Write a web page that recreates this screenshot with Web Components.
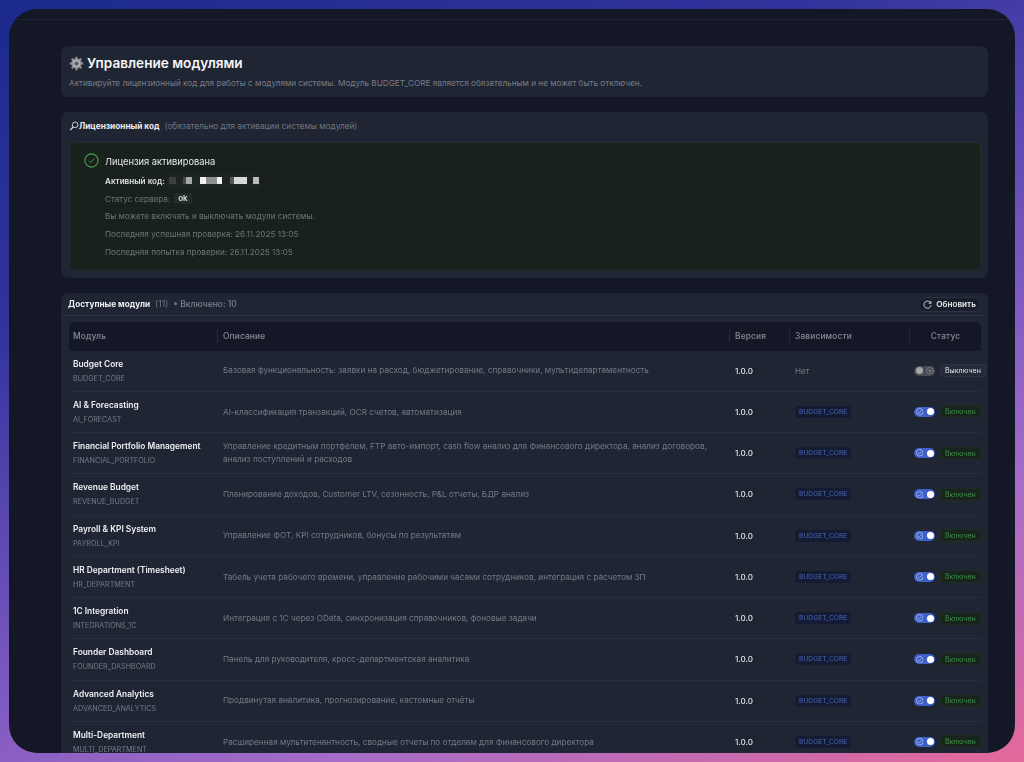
<!DOCTYPE html>
<html lang="ru">
<head>
<meta charset="utf-8">
<title>Управление модулями</title>
<style>
html, body { margin: 0; height: 762px; overflow: hidden; }
body {
  padding: 9px;
  box-sizing: border-box;
  background: linear-gradient(158deg, #1b2a8c 0%, #32339c 28%, #7a58c0 58%, #a56cc8 76%, #e4699a 100%);
  font-family: Inter, "Liberation Sans", sans-serif;
}
</style>
</head>
<body>
<app-window>
  <page-header></page-header>
  <license-card></license-card>
  <modules-card>
    <module-row name="Budget Core" code="BUDGET_CORE" description="Базовая функциональность: заявки на расход, бюджетирование, справочники, мультидепартаментность" off></module-row>
    <module-row name="AI &amp; Forecasting" code="AI_FORECAST" description="AI-классификация транзакций, OCR счетов, автоматизация"></module-row>
    <module-row name="Financial Portfolio Management" code="FINANCIAL_PORTFOLIO" description="Управление кредитным портфелем, FTP авто-импорт, cash flow анализ для Финансового директора, анализ договоров, анализ поступлений и расходов"></module-row>
    <module-row name="Revenue Budget" code="REVENUE_BUDGET" description="Планирование доходов, Customer LTV, сезонность, P&amp;L отчеты, БДР анализ"></module-row>
    <module-row name="Payroll &amp; KPI System" code="PAYROLL_KPI" description="Управление ФОТ, KPI сотрудников, бонусы по результатам"></module-row>
    <module-row name="HR Department (Timesheet)" code="HR_DEPARTMENT" description="Табель учета рабочего времени, управление рабочими часами сотрудников, интеграция с расчетом ЗП"></module-row>
    <module-row name="1C Integration" code="INTEGRATIONS_1C" description="Интеграция с 1С через OData, синхронизация справочников, фоновые задачи"></module-row>
    <module-row name="Founder Dashboard" code="FOUNDER_DASHBOARD" description="Панель для руководителя, кросс-департментская аналитика"></module-row>
    <module-row name="Advanced Analytics" code="ADVANCED_ANALYTICS" description="Продвинутая аналитика, прогнозирование, кастомные отчёты"></module-row>
    <module-row name="Multi-Department" code="MULTI_DEPARTMENT" description="Расширенная мультитенантность, сводные отчеты по отделам для Финансового директора"></module-row>
  </modules-card>
</app-window>

<script>
const COLUMNS = "148px 512px 60px 120px 72px";

class AppWindow extends HTMLElement {
  constructor() {
    super();
    this.attachShadow({ mode: "open" });
    this.shadowRoot.innerHTML = `
      <style>
        :host {
          display: block;
          height: 744px;
          border-radius: 28px;
          background: #141826;
          overflow: hidden;
          color: #fff;
          filter: blur(.3px);
        }
        .topline { height: 10px; border-bottom: 1px solid #1d2231; }
        .content {
          display: flex;
          flex-direction: column;
          gap: 15px;
          padding: 26px 27px 0 52px;
        }
      </style>
      <div class="topline"></div>
      <div class="content"><slot></slot></div>
    `;
  }
}

class PageHeader extends HTMLElement {
  constructor() {
    super();
    this.attachShadow({ mode: "open" });
    this.shadowRoot.innerHTML = `
      <style>
        :host {
          display: block;
          height: 51px;
          box-sizing: border-box;
          padding: 8px 8px 0;
          background: #1f2533;
          border-radius: 7px;
        }
        h1 {
          display: flex;
          align-items: center;
          gap: 3px;
          margin: 0;
          height: 18px;
          font-size: 13.6px;
          font-weight: 600;
          color: #f4f5f7;
        }
        svg { width: 15px; height: 15px; flex: none; }
        p {
          margin: 5px 0 0;
          font-size: 8.2px;
          line-height: 12px;
          color: #787e8a;
          white-space: nowrap;
        }
      </style>
      <h1>
        <svg viewBox="0 0 24 24">
          <path fill="#8b8e94" d="M10.4 1h3.2l.5 3 1.9.8 2.5-1.8 2.3 2.3-1.8 2.5.8 1.9 3 .5v3.2l-3 .5-.8 1.9 1.8 2.5-2.3 2.3-2.5-1.8-1.9.8-.5 3h-3.2l-.5-3-1.9-.8-2.5 1.8-2.3-2.3 1.8-2.5-.8-1.9-3-.5v-3.2l3-.5.8-1.9L3.2 5.3l2.3-2.3 2.5 1.8 1.9-.8z"/>
          <circle cx="12" cy="12" r="6" fill="#aeb0b4"/>
          <circle cx="12" cy="12" r="3.4" fill="#5c5f66"/>
        </svg>
        Управление модулями
      </h1>
      <p>Активируйте лицензионный код для работы с модулями системы. Модуль BUDGET_CORE является обязательным и не может быть отключен.</p>
    `;
  }
}

class LicenseCard extends HTMLElement {
  constructor() {
    super();
    this.attachShadow({ mode: "open" });
    this.shadowRoot.innerHTML = `
      <style>
        :host {
          display: block;
          height: 166px;
          box-sizing: border-box;
          padding: 7px 7px 0 8px;
          background: #1f2533;
          border-radius: 7px;
        }
        .head {
          display: flex;
          align-items: center;
          height: 13px;
          font-size: 8.25px;
          white-space: nowrap;
        }
        .head svg { width: 10px; height: 10px; flex: none; }
        .head b { font-weight: 700; color: #eceef1; }
        .head span { margin-left: 5px; color: #6f7682; }
        .status {
          display: flex;
          gap: 6px;
          height: 129px;
          box-sizing: border-box;
          margin-top: 10px;
          padding: 10px 14px 0;
          background: #18211c;
          border: 1px solid #212d27;
          border-radius: 6px;
        }
        .check { width: 15px; height: 15px; flex: none; }
        .lines { font-size: 8.13px; color: #707674; }
        .lines div { display: flex; align-items: center; height: 17.8px; white-space: nowrap; }
        .lines .title { font-size: 9.3px; color: #e6e9e7; height: 16px; margin-bottom: 3px; }
        .active { color: #dfe2e0; font-weight: 600; }
        .mask {
          width: 93px;
          height: 14px;
          margin-left: 2px;
          border-radius: 2px;
          background:
            linear-gradient(90deg,
              transparent 2px, #3c413e 2px 9px, transparent 9px 16px, #454a47 16px 19px,
              #a4a8a6 19px 25px, transparent 25px 33px, #f1f2f1 33px 39px, #8c908e 39px 50px,
              #f1f2f1 50px 55px, transparent 55px 63px, #555a57 63px 67px, #d8dad9 67px 80px,
              transparent 80px 86px, #b9bcba 86px 92px, transparent 92px) center / 100% 7px no-repeat,
            #1c2521;
        }
        .ok {
          margin-left: 4px;
          padding: 1px 4px;
          background: #242c28;
          border-radius: 2px;
          color: #dfe2e0;
          font-weight: 600;
          font-size: 8px;
          line-height: 9px;
        }
      </style>
      <div class="head">
        <svg viewBox="0 0 12 12" fill="none" stroke="#d8dade" stroke-width="1.1">
          <circle cx="7.4" cy="4.6" r="3.4"/>
          <path d="M5 7.2 1.4 10.8" stroke-width="1.4"/>
        </svg>
        <b>Лицензионный код</b>
        <span>(обязательно для активации системы модулей)</span>
      </div>
      <div class="status">
        <svg class="check" viewBox="0 0 15 15" fill="none" stroke="#45a350">
          <circle cx="7.5" cy="7.5" r="6.6" stroke-width="1.1"/>
          <path d="M4.9 7.7 6.7 9.5 10.2 5.7" stroke-width="1"/>
        </svg>
        <div class="lines">
          <div class="title">Лицензия активирована</div>
          <div class="active">Активный код:<span class="mask"></span></div>
          <div>Статус сервера:<span class="ok">ok</span></div>
          <div>Вы можете включать и выключать модули системы.</div>
          <div>Последняя успешная проверка: 26.11.2025 13:05</div>
          <div>Последняя попытка проверки: 26.11.2025 13:05</div>
        </div>
      </div>
    `;
  }
}

class ModulesCard extends HTMLElement {
  constructor() {
    super();
    this.attachShadow({ mode: "open" });
    this.shadowRoot.innerHTML = `
      <style>
        :host {
          display: block;
          background: #1f2533;
          border-radius: 7px 7px 0 0;
          padding-bottom: 20px;
        }
        .bar {
          display: flex;
          align-items: center;
          height: 22px;
          padding: 0 7px 0 7px;
          border-bottom: 1px solid #2a3040;
          font-size: 8.25px;
          white-space: nowrap;
        }
        .bar b { font-weight: 700; color: #eceef1; }
        .count { margin-left: 5px; font-size: 8.6px; color: #6f7682; }
        .enabled { margin-left: 5px; font-size: 8.5px; color: #79808c; font-weight: 500; }
        button {
          display: flex;
          align-items: center;
          gap: 4px;
          margin-left: auto;
          height: 15px;
          padding: 0 4px;
          background: #191e2c;
          border: 1px solid #2b3142;
          border-radius: 8px;
          color: #e8eaee;
          font: 600 8.2px Inter, "Liberation Sans", sans-serif;
        }
        button svg { width: 9px; height: 9px; }
        .table { padding: 6px 7px 0 8px; }
        .thead {
          display: grid;
          grid-template-columns: ${COLUMNS};
          height: 28.5px;
          align-items: center;
          background: #141826;
          border-radius: 6px 6px 0 0;
          font-size: 8.4px;
          font-weight: 500;
          color: #858b97;
          letter-spacing: .15px;
        }
        .thead div { height: 14px; line-height: 14px; padding-left: 5px; border-left: 1px solid #262c3a; }
        .thead div:first-child { padding-left: 4px; border-left: 0; }
        .thead div:last-child { padding-left: 0; text-align: center; }
      </style>
      <div class="bar">
        <b>Доступные модули</b>
        <span class="count">(11)</span>
        <span class="enabled">• Включено: 10</span>
        <button>
          <svg viewBox="0 0 12 12" fill="none" stroke="#e8eaee" stroke-width="1.1">
            <path d="M10.4 4.2A4.8 4.8 0 1 0 10.8 6.8"/>
            <path d="M10.6 1.4v3h-3"/>
          </svg>
          Обновить
        </button>
      </div>
      <div class="table">
        <div class="thead">
          <div>Модуль</div><div>Описание</div><div>Версия</div><div>Зависимости</div><div>Статус</div>
        </div>
        <slot></slot>
      </div>
    `;
  }
}

class ModuleRow extends HTMLElement {
  constructor() {
    super();
    this.attachShadow({ mode: "open" });
    const off = this.hasAttribute("off");
    this.shadowRoot.innerHTML = `
      <style>
        :host {
          display: grid;
          grid-template-columns: ${COLUMNS};
          height: 41.25px;
          box-sizing: border-box;
          align-items: center;
          border-bottom: 1px solid #282e3d;
          white-space: nowrap;
        }
        .name { padding: 1px 0 0 4px; }
        .name b { display: block; font-size: 8.35px; line-height: 13px; font-weight: 600; color: #eef0f3; }
        .name span { display: block; margin-top: 1px; font-size: 7.2px; line-height: 13px; color: #747a86; }
        .desc { padding: .4px 14px 0 6px; font-size: 8.2px; line-height: 13px; color: #747a86; white-space: normal; }
        .ver { padding-left: 6px; font-size: 8.1px; font-weight: 500; color: #dfe2e6; }
        .dep { padding-left: 6px; font-size: 8.2px; color: #747a86; }
        .status { display: flex; align-items: center; gap: 5px; padding-left: 5px; }
      </style>
      <div class="name"><b></b><span></span></div>
      <div class="desc"></div>
      <div class="ver">1.0.0</div>
      <div class="dep">${off ? "Нет" : "<dep-badge>BUDGET_CORE</dep-badge>"}</div>
      <div class="status">
        <status-toggle ${off ? "off" : ""}></status-toggle>
        <status-badge ${off ? "off" : ""}>${off ? "Выключен" : "Включен"}</status-badge>
      </div>
    `;
    this.shadowRoot.querySelector("b").textContent = this.getAttribute("name");
    this.shadowRoot.querySelector(".name span").textContent = this.getAttribute("code");
    this.shadowRoot.querySelector(".desc").textContent = this.getAttribute("description");
  }
}

class DepBadge extends HTMLElement {
  constructor() {
    super();
    this.attachShadow({ mode: "open" });
    this.shadowRoot.innerHTML = `
      <style>
        :host {
          display: inline-block;
          height: 12px;
          line-height: 12px;
          padding: 0 4px;
          background: #141b33;
          border-radius: 3px;
          font-size: 6.7px;
          color: #4566bc;
        }
      </style>
      <slot></slot>
    `;
  }
}

class StatusToggle extends HTMLElement {
  constructor() {
    super();
    this.attachShadow({ mode: "open" });
    const off = this.hasAttribute("off");
    this.shadowRoot.innerHTML = `
      <style>
        :host {
          display: flex;
          flex: none;
          align-items: center;
          justify-content: space-between;
          width: 21px;
          height: 10px;
          box-sizing: border-box;
          padding: 0 1.5px;
          border-radius: 5px;
          background: ${off ? "#494c53" : "#3f60c9"};
        }
        i { display: block; width: 7px; height: 7px; border-radius: 50%; background: ${off ? "#a6a7a9" : "#fff"}; }
        svg { display: block; width: 7.5px; height: 7.5px; }
      </style>
      ${off
        ? `<i></i><svg viewBox="0 0 8 8" fill="none" stroke="#8a8c91" stroke-width=".7"><circle cx="4" cy="4" r="3.5"/><circle cx="4" cy="4" r="1.2" fill="#8a8c91" stroke="none"/></svg>`
        : `<svg viewBox="0 0 8 8" fill="none" stroke="#c9d4f5" stroke-width=".7"><circle cx="4" cy="4" r="3.5"/><path d="M2.5 4.1 3.6 5.2 5.6 2.9"/></svg><i></i>`}
    `;
  }
}

class StatusBadge extends HTMLElement {
  constructor() {
    super();
    this.attachShadow({ mode: "open" });
    const off = this.hasAttribute("off");
    this.shadowRoot.innerHTML = `
      <style>
        :host {
          display: inline-block;
          flex: none;
          height: 13px;
          line-height: 13px;
          padding: 0 5px;
          border-radius: 4px;
          font-size: 7px;
          background: ${off ? "#252b39" : "#18251f"};
          color: ${off ? "#e3e5e9" : "#3f8f48"};
          box-shadow: inset 0 0 0 1px ${off ? "#2e3444" : "#1e2d24"};
        }
      </style>
      <slot></slot>
    `;
  }
}

customElements.define("app-window", AppWindow);
customElements.define("page-header", PageHeader);
customElements.define("license-card", LicenseCard);
customElements.define("dep-badge", DepBadge);
customElements.define("status-toggle", StatusToggle);
customElements.define("status-badge", StatusBadge);
customElements.define("module-row", ModuleRow);
customElements.define("modules-card", ModulesCard);
</script>
</body>
</html>
